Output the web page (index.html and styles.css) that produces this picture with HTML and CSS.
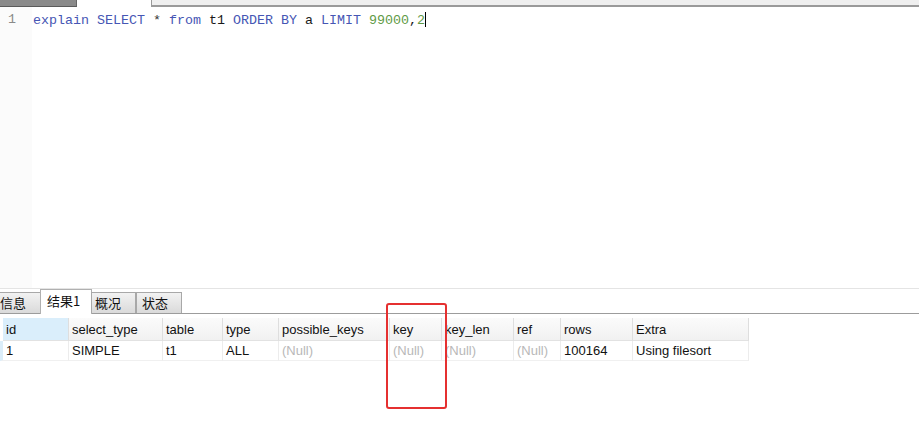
FILE: index.html
```html
<!DOCTYPE html>
<html>
<head>
<meta charset="utf-8">
<link rel="stylesheet" href="styles.css">
</head>
<body>
<div class="page">
  <div class="topbar">
    <div class="top-tab"></div>
    <div class="top-gap"></div>
    <div class="top-strip"></div>
  </div>
  <div class="editor">
    <div class="gutter"><div class="ln">1</div></div>
    <div class="code"><span class="kw">explain</span> <span class="kw">SELECT</span> <span class="op">*</span> <span class="kw">from</span> t1 <span class="kw">ORDER</span> <span class="kw">BY</span> a <span class="kw">LIMIT</span> <span class="num">99000</span>,<span class="num">2</span><span class="caret"></span></div>
  </div>
  <div class="tabs">
    <div class="tab">信息</div>
    <div class="tab active">结果1</div>
    <div class="tab">概况</div>
    <div class="tab">状态</div>
  </div>
  <div class="results">
    <div class="grid">
      <div class="row head">
        <div class="cell c-id sel">id</div>
        <div class="cell c-st">select_type</div>
        <div class="cell c-tb">table</div>
        <div class="cell c-ty">type</div>
        <div class="cell c-pk">possible_keys</div>
        <div class="cell c-k">key</div>
        <div class="cell c-kl">key_len</div>
        <div class="cell c-rf">ref</div>
        <div class="cell c-rw">rows</div>
        <div class="cell c-ex">Extra</div>
      </div>
      <div class="row data">
        <div class="cell c-id">1</div>
        <div class="cell c-st">SIMPLE</div>
        <div class="cell c-tb">t1</div>
        <div class="cell c-ty">ALL</div>
        <div class="cell c-pk null">(Null)</div>
        <div class="cell c-k null">(Null)</div>
        <div class="cell c-kl null">(Null)</div>
        <div class="cell c-rf null">(Null)</div>
        <div class="cell c-rw">100164</div>
        <div class="cell c-ex">Using filesort</div>
      </div>
    </div>
    <div class="highlight"></div>
  </div>
</div>
</body>
</html>
```

FILE: styles.css
```css
html, body {
  margin: 0;
  padding: 0;
  background: #ffffff;
}
.page {
  width: 919px;
  height: 446px;
  overflow: hidden;
  position: relative;
  font-family: "Liberation Sans", "Noto Sans CJK SC", sans-serif;
}
.topbar {
  display: flex;
  height: 7px;
}
.top-tab {
  width: 76px;
  height: 6px;
  background: #8a8a8a;
  border-bottom: 1px solid #5a5a5a;
  border-right: 1px solid #666;
}
.top-gap {
  width: 74px;
}
.top-strip {
  flex: 1;
  height: 5px;
  background: #efefef;
  border-left: 1px solid #9a9a9a;
  border-bottom: 2px solid #9a9a9a;
}
.editor {
  display: flex;
  height: 281px;
}
.gutter {
  width: 32px;
  background: #fbfbfb;
  padding-top: 5px;
}
.ln {
  font-family: "Liberation Mono", monospace;
  font-size: 13.33px;
  line-height: 16px;
  color: #8a8a8a;
  padding-left: 8px;
}
.code {
  padding-top: 5px;
  padding-left: 1px;
  font-family: "Liberation Mono", monospace;
  font-size: 13.33px;
  line-height: 16px;
  color: #1a1a1a;
  white-space: pre;
}
.kw { color: #4656b4; }
.op { color: #333; }
.num { color: #5e9a44; }
.caret {
  display: inline-block;
  width: 1px;
  height: 15px;
  background: #000;
  vertical-align: -3px;
}
.tabs {
  display: flex;
  align-items: flex-end;
  height: 24px;
  border-top: 1px solid #e4e4e4;
  border-bottom: 1px solid #9c9c9c;
}
.tab {
  height: 21px;
  line-height: 19px;
  padding: 0 4px 0 0;
  font-size: 13px;
  color: #111;
  background: linear-gradient(#f2f2f2, #dadada);
  border: 1px solid #a8a8a8;
  border-bottom: none;
  box-sizing: border-box;
  font-family: "Noto Sans CJK SC", sans-serif;
}
.tab:nth-child(1) { width: 41px; border-left: none; }
.tab:nth-child(3) { width: 45px; padding-left: 3px; margin-left: -1px; }
.tab:nth-child(4) { width: 46px; padding-left: 5px; }
.tab.active {
  width: 52px;
  height: 25px;
  line-height: 21px;
  background: #ffffff;
  padding-left: 6px;
  margin-bottom: -1px;
  margin-left: -1px;
  border-color: #b0b0b0;
}
.results {
  position: relative;
  flex: 1;
  padding-top: 4px;
}
.grid {
  display: flex;
  flex-direction: column;
}
.row {
  display: flex;
}
.cell {
  box-sizing: border-box;
  padding-left: 3px;
  font-size: 13px;
  color: #111;
  white-space: nowrap;
  overflow: hidden;
  border-right: 1px solid #ececec;
}
.head .cell {
  height: 23px;
  line-height: 23px;
  background: linear-gradient(#fbfbfb, #f1f1f1);
  border-bottom: 1px solid #e2e2e2;
  border-right: 1px solid #dedede;
}
.head .cell.sel {
  background: #daeefb;
}
.data .cell {
  height: 20px;
  line-height: 20px;
  border-bottom: 1px solid #f0f0f0;
}
.null { color: #b8b8b8; }
.c-id { width: 66px; margin-left: 3px; }
.data .c-id { width: 69px; margin-left: 0; border-left: 3px solid #dbedf9; padding-left: 3px; }
.c-st { width: 94px; }
.c-tb { width: 60px; }
.c-ty { width: 56px; }
.c-pk { width: 111px; }
.c-k { width: 52px; }
.c-kl { width: 72px; }
.c-rf { width: 47px; }
.c-rw { width: 72px; }
.c-ex { width: 116px; }
.highlight {
  position: absolute;
  left: 386px;
  top: -11px;
  width: 61px;
  height: 106px;
  box-sizing: border-box;
  border: 2px solid #e53030;
  border-radius: 3px;
}
```
